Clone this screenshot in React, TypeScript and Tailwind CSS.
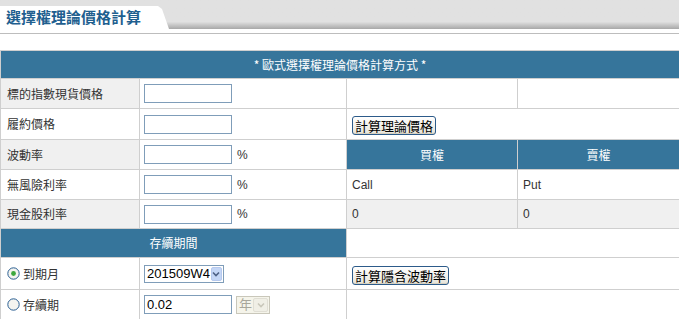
import React from "react";

const cjk = "font-['Noto_Sans_CJK_TC','Liberation_Sans',sans-serif]";

function TextBox({ value = "" }: { value?: string }) {
  return (
    <div className="h-[19px] w-[88px] border border-[#7f9db9] bg-white px-[2px] text-[13px] leading-[17px] text-black font-['Liberation_Sans',sans-serif]">
      {value}
    </div>
  );
}

function XpButton({ label }: { label: string }) {
  return (
    <div className="inline-flex h-[19px] items-center rounded-[3px] border border-[#2c5b8a] bg-gradient-to-b from-white to-[#e6e4da] px-[2px] text-[13px] leading-none text-black shadow-[inset_0_-1px_0_#d6d0c0]">
      {label}
    </div>
  );
}

function Radio({ checked }: { checked?: boolean }) {
  return (
    <svg width="13" height="13" viewBox="0 0 13 13" className="shrink-0">
      <circle cx="6.5" cy="6.5" r="5.7" fill="#f4f4f0" stroke="#2a5e92" strokeWidth="1" />
      {checked && <circle cx="6.5" cy="6.5" r="2.4" fill="#3ea83e" />}
    </svg>
  );
}

function Select({ value, width, disabled }: { value: string; width: number; disabled?: boolean }) {
  return (
    <div
      className={`flex h-[18px] items-stretch border ${disabled ? "border-[#c9c7ba] bg-[#f5f4ea] text-[#a9a79b]" : "border-[#7f9db9] bg-white text-black"}`}
      style={{ width }}
    >
      <span className="flex-1 pl-[2px] text-[13px] leading-[16px] font-['Liberation_Sans','Noto_Sans_CJK_TC',sans-serif]">{value}</span>
      <span
        className={`m-[1px] flex w-[15px] items-center justify-center rounded-[2px] ${disabled ? "bg-[#f0efe6] border border-[#e0ded4]" : "bg-[#c4d6f6] border border-[#b6c9ee]"}`}
      >
        <svg width="8" height="6" viewBox="0 0 8 6">
          <path d="M1 1.5 L4 4.5 L7 1.5" fill="none" stroke={disabled ? "#c9c7ba" : "#4d6185"} strokeWidth="1.6" />
        </svg>
      </span>
    </div>
  );
}

const td = "border border-[#cfcfcf] align-middle";
const label = `${td} pl-[6px] text-[12px] text-[#333]`;
const head = `border border-[#cfcfcf] bg-[#36759b] text-center text-[12px] text-white`;

export default function App() {
  return (
    <div className={`h-[319px] w-[679px] overflow-hidden bg-white ${cjk}`}>
      <div className="h-[29px] bg-gradient-to-b from-[#e1e1e1] from-[75%] to-[#a8a8a8]">
        <div className="h-[6px]" />
        <div className="h-[23px] w-[169px] rounded-tr-[8px] bg-white [clip-path:polygon(0_0,158px_0,162px_3px,169px_23px,0_23px)]">
          <div className="pl-[6px] pt-[2px] text-[15px] font-bold leading-[18px] text-[#1f5f8f]">選擇權理論價格計算</div>
        </div>
      </div>
      <div className="mt-[4px] h-[1px] bg-[#bdbdbd]" />
      <div className="h-[16px]" />

      <table className="w-[679px] table-fixed border-collapse">
        <colgroup>
          <col className="w-[139px]" />
          <col className="w-[207px]" />
          <col className="w-[171px]" />
          <col className="w-[162px]" />
        </colgroup>
        <tbody>
          <tr className="h-[28px]">
            <td colSpan={4} className={head}>* 歐式選擇權理論價格計算方式 *</td>
          </tr>
          <tr className="h-[30px]">
            <td className={`${label} bg-[#f0f0f0]`}>標的指數現貨價格</td>
            <td className={`${td} pl-[4px]`}><TextBox /></td>
            <td className={td} />
            <td className={td} />
          </tr>
          <tr className="h-[31px]">
            <td className={label}>履約價格</td>
            <td className={`${td} pl-[4px]`}><TextBox /></td>
            <td colSpan={2} className={`${td} pl-[5px]`}><XpButton label="計算理論價格" /></td>
          </tr>
          <tr className="h-[30px]">
            <td className={`${label} bg-[#f0f0f0]`}>波動率</td>
            <td className={`${td} pl-[4px]`}>
              <div className="flex items-center gap-[5px]"><TextBox /><span className="text-[12px] text-[#333] font-['Liberation_Sans',sans-serif]">%</span></div>
            </td>
            <td className={head}>買權</td>
            <td className={head}>賣權</td>
          </tr>
          <tr className="h-[30px]">
            <td className={label}>無風險利率</td>
            <td className={`${td} pl-[4px]`}>
              <div className="flex items-center gap-[5px]"><TextBox /><span className="text-[12px] text-[#333] font-['Liberation_Sans',sans-serif]">%</span></div>
            </td>
            <td className={`${td} pl-[5px] text-[12px] text-[#333] font-['Liberation_Sans',sans-serif]`}>Call</td>
            <td className={`${td} pl-[5px] text-[12px] text-[#333] font-['Liberation_Sans',sans-serif]`}>Put</td>
          </tr>
          <tr className="h-[29px]">
            <td className={`${label} bg-[#f0f0f0]`}>現金股利率</td>
            <td className={`${td} pl-[4px]`}>
              <div className="flex items-center gap-[5px]"><TextBox /><span className="text-[12px] text-[#333] font-['Liberation_Sans',sans-serif]">%</span></div>
            </td>
            <td className={`${td} bg-[#f0f0f0] pl-[5px] text-[12px] text-[#333] font-['Liberation_Sans',sans-serif]`}>0</td>
            <td className={`${td} bg-[#f0f0f0] pl-[5px] text-[12px] text-[#333] font-['Liberation_Sans',sans-serif]`}>0</td>
          </tr>
          <tr className="h-[29px]">
            <td colSpan={2} className={head}>存續期間</td>
            <td colSpan={2} className={td} />
          </tr>
          <tr className="h-[32px]">
            <td className={`${td} pl-[6px]`}>
              <div className="flex items-center gap-[3px] text-[12px] text-[#333]"><Radio checked /><span>到期月</span></div>
            </td>
            <td className={`${td} pl-[4px]`}><Select value="201509W4" width={80} /></td>
            <td colSpan={2} className={`${td} pl-[5px]`}><XpButton label="計算隱含波動率" /></td>
          </tr>
          <tr className="h-[30px]">
            <td className={`${td} pl-[6px]`}>
              <div className="flex items-center gap-[3px] text-[12px] text-[#333]"><Radio /><span>存續期</span></div>
            </td>
            <td className={`${td} pl-[4px]`}>
              <div className="flex items-center gap-[4px]"><TextBox value="0.02" /><Select value="年" width={34} disabled /></div>
            </td>
            <td colSpan={2} className={td} />
          </tr>
        </tbody>
      </table>
    </div>
  );
}
